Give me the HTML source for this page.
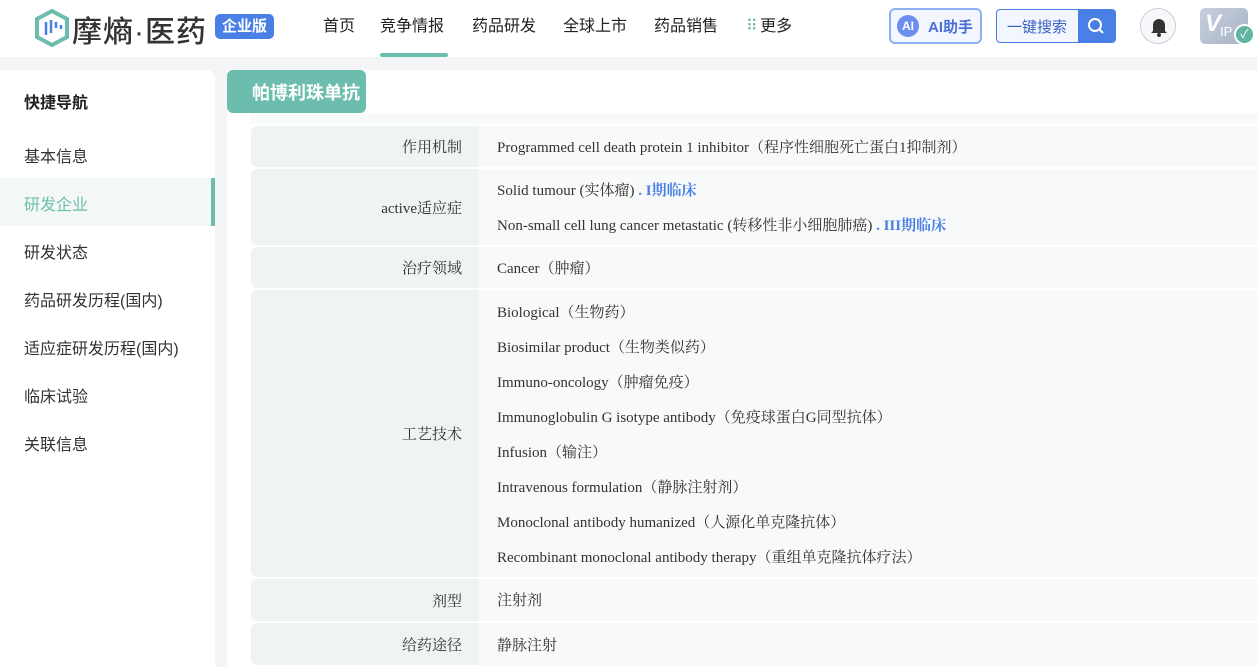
<!DOCTYPE html>
<html><head><meta charset="utf-8"><style>
*{margin:0;padding:0;box-sizing:border-box}
body{width:1257px;height:667px;overflow:hidden;background:#f4f5f7;font-family:"Liberation Sans","Noto Sans CJK SC",sans-serif;position:relative}
.hdr{position:absolute;left:0;top:0;width:1257px;height:57px;background:#fff}
.logo{position:absolute;left:36px;top:7px;font-size:30px;color:#333;font-weight:500;letter-spacing:1px}
.badge{position:absolute;left:215px;top:14px;width:59px;height:25px;background:#4a7fe5;color:#fff;border-radius:5px;font-size:15px;font-weight:bold;text-align:center;line-height:25px}
.nav{position:absolute;top:12px;font-size:16px;color:#222}
.navline{position:absolute;left:380px;top:53px;width:68px;height:4px;background:#6dbdaf;border-radius:2px}
.side{position:absolute;left:0;top:70px;width:215px;height:597px;background:#fff;border-radius:0 8px 0 0}
.si{position:absolute;left:24px;font-size:16px;color:#333}
.main{position:absolute;left:227px;top:70px;width:1030px;height:597px;background:#fff}
.tab{position:absolute;left:227px;top:70px;width:139px;height:43px;background:#6dbdaf;border-radius:6px;color:#fff;font-size:18px;font-weight:bold;padding:9px 0 0 25px;white-space:nowrap;overflow:hidden}
.row{position:absolute;left:251px;width:1006px}
.lab{position:absolute;left:0;top:0;bottom:0;width:228px;background:#eef3f3;border-radius:6px 0 0 6px;font-family:"Liberation Serif","Noto Serif CJK SC",serif;font-size:15px;color:#333;text-align:right;padding-right:17px;display:flex;align-items:center;justify-content:flex-end}
.val{position:absolute;left:228px;right:0;top:0;bottom:0;background:#f8fafa;font-family:"Liberation Serif","Noto Serif CJK SC",serif;font-size:15px;color:#333}
.val div{position:absolute;left:18px;white-space:nowrap}
.b{color:#4a7fe5;font-weight:bold}
</style></head><body>
<div class="hdr">
<svg style="position:absolute;left:34px;top:9px" width="36" height="38" viewBox="0 0 36 38"><path d="M18 2 L33 10 L33 28 L18 36 L3 28 L3 10 Z" fill="none" stroke="#6dbdaf" stroke-width="4"/><g stroke="#4a7fe5" stroke-width="2.5"><line x1="12" y1="13" x2="12" y2="26"/><line x1="17" y1="11" x2="17" y2="24"/><line x1="22" y1="13" x2="22" y2="19"/><line x1="27" y1="16" x2="27" y2="20"/></g></svg>
<div class="logo" style="left:72px">摩熵·医药</div>
<div class="badge">企业版</div>
<div class="nav" style="left:323px">首页</div>
<div class="nav" style="left:380px">竞争情报</div>
<div class="nav" style="left:472px">药品研发</div>
<div class="nav" style="left:563px">全球上市</div>
<div class="nav" style="left:654px">药品销售</div>
<div class="nav" style="left:746px"><span style="color:#6dbdaf;letter-spacing:-2px">⠿</span> 更多</div>
<div class="navline"></div>
<div style="position:absolute;left:889px;top:8px;width:93px;height:36px;border:2px solid #8fb0f5;border-radius:6px;background:#f3f6ff"><div style="position:absolute;left:6px;top:5px;width:22px;height:22px;border-radius:50%;background:#6b8ef0;color:#fff;font-size:12px;font-weight:bold;text-align:center;line-height:22px">AI</div><span style="position:absolute;left:37px;top:6px;font-size:15px;font-weight:bold;color:#4a6fd8">AI助手</span></div>
<div style="position:absolute;left:996px;top:9px;width:120px;height:34px;border:1px solid #4a7fe5;border-radius:4px;background:#f3f6ff;overflow:hidden"><span style="position:absolute;left:10px;top:6px;font-size:15px;color:#3b63c4">一键搜索</span><div style="position:absolute;right:0;top:0;width:37px;height:34px;background:#4a7fe5"><svg width="37" height="34"><circle cx="17" cy="15" r="6" fill="none" stroke="#fff" stroke-width="2"/><line x1="21.5" y1="19.5" x2="25" y2="23" stroke="#fff" stroke-width="2"/></svg></div></div>
<div style="position:absolute;left:1140px;top:8px;width:36px;height:36px;border:1px solid #ccd;border-radius:50%;background:#f8f8fa"><svg width="36" height="36"><path d="M12 22 L12 16 A6 6 0 0 1 24 16 L24 22 L26 24 L10 24 Z" fill="#333"/><circle cx="18" cy="26" r="2" fill="#333"/></svg></div>
<div style="position:absolute;left:1200px;top:8px;width:48px;height:36px;border-radius:5px;background:linear-gradient(135deg,#c8cfdd,#a8b3c8)"><span style="position:absolute;left:5px;top:2px;color:#fff;font-size:24px;font-weight:bold;font-style:italic">V</span><span style="position:absolute;left:20px;top:16px;color:#fff;font-size:13px">IP</span></div>
<div style="position:absolute;left:1234px;top:24px;width:21px;height:21px;border-radius:50%;background:#5fb5a0;border:2px solid #fff;color:#fff;font-size:12px;text-align:center;line-height:17px">✓</div>
</div>
<div class="side">
<div class="si" style="top:19px;font-weight:bold;color:#222">快捷导航</div>
<div class="si" style="top:73px">基本信息</div>
<div style="position:absolute;left:0;top:108px;width:215px;height:48px;background:#f3f8f7"></div>
<div style="position:absolute;left:211px;top:108px;width:4px;height:48px;background:#6dbdaf"></div>
<div class="si" style="top:121px;color:#6dbdaf">研发企业</div>
<div class="si" style="top:169px">研发状态</div>
<div class="si" style="top:217px">药品研发历程(国内)</div>
<div class="si" style="top:265px">适应症研发历程(国内)</div>
<div class="si" style="top:313px">临床试验</div>
<div class="si" style="top:361px">关联信息</div>
</div>
<div class="main"></div>
<div style="position:absolute;left:251px;top:113px;width:1006px;height:11px;background:#f8fafa"></div>
<div class="tab">帕博利珠单抗</div>
<div class="row" style="top:126px;height:41px"><div class="lab">作用机制</div><div class="val"><div style="top:10px">Programmed cell death protein 1 inhibitor（程序性细胞死亡蛋白1抑制剂）</div></div></div>
<div class="row" style="top:169px;height:76px"><div class="lab">active适应症</div><div class="val"><div style="top:10px">Solid tumour (实体瘤) <span class="b">. I期临床</span></div><div style="top:45px">Non-small cell lung cancer metastatic (转移性非小细胞肺癌) <span class="b">. III期临床</span></div></div></div>
<div class="row" style="top:247px;height:41px"><div class="lab">治疗领域</div><div class="val"><div style="top:10px">Cancer（肿瘤）</div></div></div>
<div class="row" style="top:290px;height:287px"><div class="lab">工艺技术</div><div class="val">
<div style="top:11px">Biological（生物药）</div>
<div style="top:46px">Biosimilar product（生物类似药）</div>
<div style="top:81px">Immuno-oncology（肿瘤免疫）</div>
<div style="top:116px">Immunoglobulin G isotype antibody（免疫球蛋白G同型抗体）</div>
<div style="top:151px">Infusion（输注）</div>
<div style="top:186px">Intravenous formulation（静脉注射剂）</div>
<div style="top:221px">Monoclonal antibody humanized（人源化单克隆抗体）</div>
<div style="top:256px">Recombinant monoclonal antibody therapy（重组单克隆抗体疗法）</div>
</div></div>
<div class="row" style="top:579px;height:42px"><div class="lab">剂型</div><div class="val"><div style="top:10px">注射剂</div></div></div>
<div class="row" style="top:623px;height:42px"><div class="lab">给药途径</div><div class="val"><div style="top:11px">静脉注射</div></div></div>
</body></html>
